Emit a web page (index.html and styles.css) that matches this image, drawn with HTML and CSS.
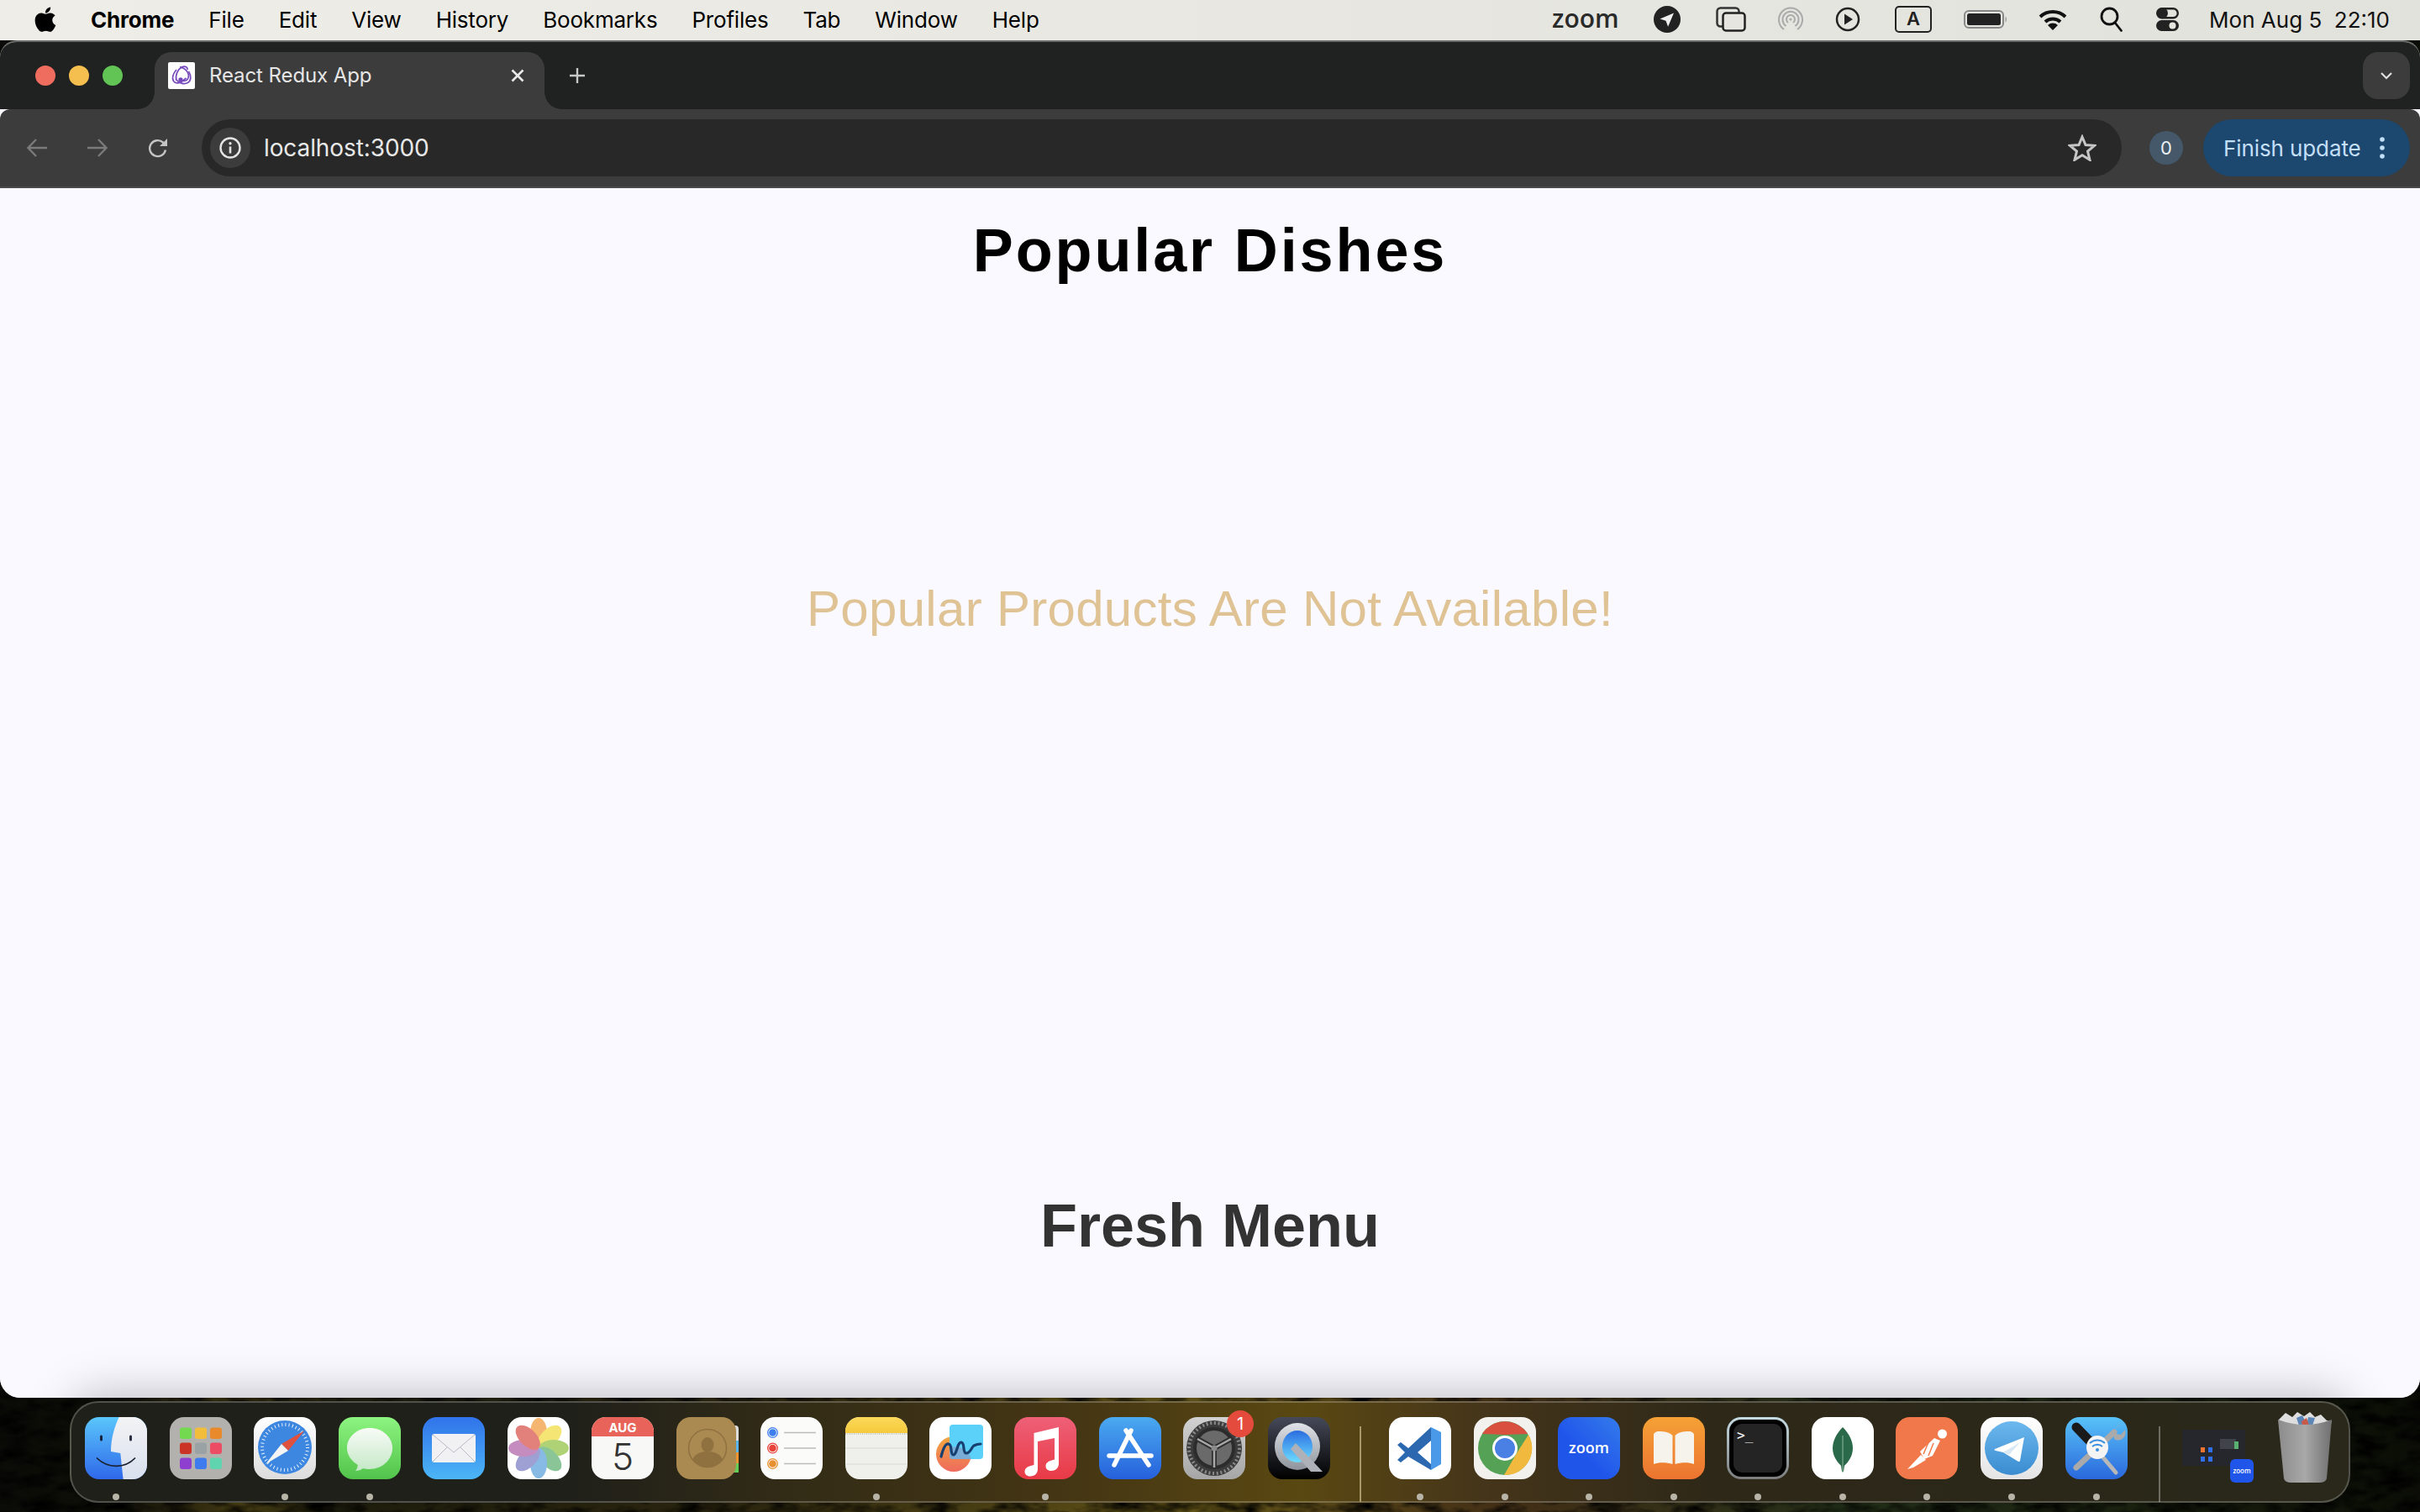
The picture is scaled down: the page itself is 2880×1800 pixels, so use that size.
FILE: index.html
```html
<!DOCTYPE html>
<html lang="en">
<head>
<meta charset="utf-8">
<title>React Redux App</title>
<link rel="stylesheet" href="styles.css">
</head>
<body>
<svg class="wallpaper" viewBox="0 0 2880 1800" preserveAspectRatio="none" aria-hidden="true">
  <defs>
    <linearGradient id="wp" x1="0" x2="1" y1="0" y2="0">
      <stop offset="0" stop-color="#0b0b07"/><stop offset=".05" stop-color="#12120a"/><stop offset=".1" stop-color="#4a4014"/><stop offset=".14" stop-color="#20200e"/><stop offset=".3" stop-color="#2e2810"/><stop offset=".5" stop-color="#6e5e1a"/><stop offset=".62" stop-color="#4a3418"/><stop offset=".76" stop-color="#26331a"/><stop offset=".9" stop-color="#1a220f"/><stop offset="1" stop-color="#0b0d06"/>
    </linearGradient>
    <filter id="leaf" x="0" y="0" width="100%" height="100%">
      <feTurbulence type="fractalNoise" baseFrequency=".03 .07" numOctaves="3" seed="4"/>
      <feColorMatrix values="0 0 0 0 0  0 0 0 0 0  0 0 0 0 0  2 0 0 0 -.7"/>
    </filter>
  </defs>
  <rect width="2880" height="1800" fill="url(#wp)"/>
  <rect width="2880" height="1800" fill="#000" filter="url(#leaf)"/>
</svg>

<header class="menubar">
  <div class="menu-left">
    <svg class="apple" viewBox="3.4 3 16.6 18.4"><path fill="#000" d="M17.05 20.28c-.98.95-2.05.8-3.08.35-1.09-.46-2.09-.48-3.24 0-1.44.62-2.2.44-3.06-.35C2.79 15.25 3.51 7.59 9.05 7.31c1.35.07 2.29.74 3.08.8 1.18-.24 2.31-.93 3.57-.84 1.51.12 2.65.72 3.4 1.8-3.12 1.87-2.38 5.98.48 7.13-.57 1.5-1.31 2.99-2.54 4.09zM12.03 7.25c-.15-2.23 1.66-4.07 3.74-4.25.29 2.58-2.34 4.5-3.74 4.25z"/></svg>
    <span class="menu-app">Chrome</span>
    <span>File</span><span>Edit</span><span>View</span><span>History</span><span>Bookmarks</span><span>Profiles</span><span>Tab</span><span>Window</span><span>Help</span>
  </div>
  <div class="menu-right">
    <span class="status-zoom">zoom</span>
    <svg class="st st-nav" viewBox="0 0 32 32"><circle cx="16" cy="16" r="16" fill="#222"/><path fill="#eee" d="M24 8.5 7.5 15.5l7 2.2 2.6 7z"/></svg>
    <svg class="st st-win" viewBox="0 0 36 30"><rect x="1.5" y="1.5" width="26" height="22" rx="4" fill="none" stroke="#333" stroke-width="2.5"/><rect x="8.5" y="7.5" width="26" height="21" rx="3.5" fill="#e6e5df" stroke="#222" stroke-width="2.5"/></svg>
    <svg class="st st-air" viewBox="0 0 30 30" fill="none" stroke="#aaa" stroke-width="2"><path d="M7 27a14 14 0 1 1 16 0"/><path d="M9.6 23a9.5 9.5 0 1 1 10.8 0"/><path d="M12 19a5 5 0 1 1 6 0"/><circle cx="15" cy="15" r="1.6" fill="#aaa" stroke="none"/></svg>
    <svg class="st st-play" viewBox="0 0 30 30"><circle cx="15" cy="15" r="13" fill="none" stroke="#222" stroke-width="2.5"/><path fill="#222" d="M11 8.5 21 15 11 21.500z"/></svg>
    <span class="st-a">A</span>
    <svg class="st st-bat" viewBox="0 0 52 22"><rect x="1" y="1" width="46" height="20" rx="5" fill="none" stroke="#888" stroke-width="2"/><rect x="4" y="4" width="40" height="14" rx="2.500" fill="#222"/><path d="M49.500 7.500c2 1 2 6 0 7z" fill="#999"/></svg>
    <svg class="st st-wifi" viewBox="0 0 34 26" fill="none" stroke="#111" stroke-width="4"><path d="M2 10a22 22 0 0 1 30 0"/><path d="M8 16a13 13 0 0 1 18 0"/><path fill="#111" stroke="none" d="M17 26l-6-6a8.500 8.500 0 0 1 12 0z"/></svg>
    <svg class="st st-search" viewBox="0 0 27 30" fill="none" stroke="#111" stroke-width="2.800"><circle cx="11.500" cy="11.500" r="9.500"/><path d="m18 19 7.500 9.500" stroke-linecap="round"/></svg>
    <svg class="st st-ctl" viewBox="0 0 27 28"><rect x="1.200" y="1.200" width="24.600" height="11" rx="5.500" fill="none" stroke="#222" stroke-width="2.400"/><circle cx="7.500" cy="6.700" r="6.500" fill="#222"/><rect y="15" width="27" height="13" rx="6.500" fill="#222"/><circle cx="19.500" cy="21.500" r="4" fill="#e6e5df"/></svg>
    <span class="clock">Mon Aug 5&nbsp;&nbsp;22:10</span>
  </div>
</header>

<div class="window">
  <div class="tabstrip">
    <div class="lights"><i class="light red"></i><i class="light yellow"></i><i class="light green"></i></div>
    <div class="tab">
      <svg class="favicon" viewBox="0 0 32 32"><rect width="32" height="32" rx="2" fill="#fff"/><g fill="none" stroke="#764abc" stroke-width="1.700"><path d="M10 22C8 15 12 8 17 5.500c4-1.500 6.500 1 6 3.500"/><path d="M14 5.800c6 .5 12 7 10 13-1.500 4-6 4.500-9 2"/><path d="M24.500 11c3.500 5.500 3 11-1 13.500-5 2.500-11 0-13-3"/><path d="M10 9c-3.500 4-6 9-3.500 13.500 2 3 6.500 3 10 .5l5-4"/><circle cx="15" cy="21" r="1.800" fill="#764abc"/></g></svg>
      <span class="tab-title">React Redux App</span>
      <svg class="tab-x" viewBox="0 0 16 16"><path d="m1.500 1.500 13 13m0-13-13 13" stroke="#e8e8e8" stroke-width="2.600"/></svg>
    </div>
    <svg class="tab-plus" viewBox="0 0 18 18"><path d="M9 0v18M0 9h18" stroke="#c8c8c8" stroke-width="2.400"/></svg>
    <div class="tab-list"><svg viewBox="0 0 14 9" class="chev"><path d="m1 1 6 6 6-6" fill="none" stroke="#e0e0e0" stroke-width="2.200"/></svg></div>
  </div>
  <div class="toolbar">
    <svg class="nav-btn" viewBox="0 0 24 24" fill="none" stroke="#7a7a7a" stroke-width="2.400"><path d="M24 12H2m9-10L1.500 12 11 22"/></svg>
    <svg class="nav-btn" viewBox="0 0 24 24" fill="none" stroke="#7a7a7a" stroke-width="2.400"><path d="M0 12h22M13 2l9.500 10L13 22"/></svg>
    <svg class="nav-btn reload" viewBox="0 0 24 26" fill="none" stroke="#c4c4c4" stroke-width="2.400"><path d="M21 15.500a9.500 9.500 0 1 1-3-9L21 9"/><path fill="#c4c4c4" stroke="none" d="M23 2v9h-9z"/></svg>
    <div class="omnibox">
      <span class="info-chip"><svg viewBox="0 0 26 26" class="info"><circle cx="13" cy="13" r="11.500" fill="none" stroke="#e4e4e4" stroke-width="2.400"/><path d="M13 11.500v8" stroke="#e4e4e4" stroke-width="2.600"/><circle cx="13" cy="7.800" r="1.700" fill="#e4e4e4"/></svg></span>
      <span class="url">localhost:3000</span>
      <svg class="star" viewBox="0 0 34 32"><path d="m17 3 4 9.500 10.500.8-8 6.800 2.500 10.200-9-5.500-9 5.500 2.500-10.200-8-6.800L13 12.500z" fill="none" stroke="#c6c6c6" stroke-width="3"/></svg>
    </div>
    <span class="count">0</span>
    <div class="update"><span>Finish update</span><svg class="kebab" viewBox="0 0 6 26"><circle cx="3" cy="3" r="2.800"/><circle cx="3" cy="13" r="2.800"/><circle cx="3" cy="23" r="2.800"/></svg></div>
  </div>
  <main class="page">
    <h1 class="title">Popular Dishes</h1>
    <p class="empty">Popular Products Are Not Available!</p>
    <h2 class="fresh">Fresh Menu</h2>
  </main>
</div>

<nav class="dock">
  <div class="app">
    <svg class="ic" viewBox="0 0 74 74"><defs><linearGradient id="f1" x1="0" x2="0" y1="0" y2="1"><stop offset="0" stop-color="#5ac6fb"/><stop offset="1" stop-color="#2f68ea"/></linearGradient><linearGradient id="f2" x1="0" x2="0" y1="0" y2="1"><stop offset="0" stop-color="#f3f3f4"/><stop offset="1" stop-color="#d8e0ee"/></linearGradient></defs><rect width="74" height="74" rx="17" fill="url(#f1)"/><path fill="url(#f2)" d="M40.700 0H57a17 17 0 0 1 17 17v40a17 17 0 0 1-17 17H45.600l-3.300-31-11.300-2c0-15 4-29 9.700-41z"/><rect x="18" y="21.500" width="3" height="7" rx="1.500" fill="#17233a"/><rect x="53" y="21.500" width="3" height="7" rx="1.500" fill="#2a3040"/><path d="M14.500 49c13 12.500 33 12.500 45 0" fill="none" stroke="#1a2130" stroke-width="1.700" stroke-linecap="round"/></svg>
    <i class="dot"></i>
  </div>
  <div class="app">
    <svg class="ic" viewBox="0 0 74 74"><rect width="74" height="74" rx="17" fill="#b2b1ad"/><rect x="12" y="12.500" width="14" height="13.500" rx="3" fill="#73d94f"/><rect x="30" y="12.500" width="14" height="13.500" rx="3" fill="#f3bd3c"/><rect x="48" y="12.500" width="14" height="13.500" rx="3" fill="#e88a2c"/><rect x="12" y="30.500" width="14" height="13.500" rx="3" fill="#cc3327"/><rect x="30" y="30.500" width="14" height="13.500" rx="3" fill="#9aa2a6"/><rect x="48" y="30.500" width="14" height="13.500" rx="3" fill="#ec4d65"/><rect x="12" y="48.500" width="14" height="13.500" rx="3" fill="#8e3fd0"/><rect x="30" y="48.500" width="14" height="13.500" rx="3" fill="#3d7bef"/><rect x="48" y="48.500" width="14" height="13.500" rx="3" fill="#5fd4ae"/></svg>
    <i class="dot hide"></i>
  </div>
  <div class="app">
    <svg class="ic" viewBox="0 0 74 74"><defs><linearGradient id="s1" x1="0" x2="0" y1="0" y2="1"><stop offset="0" stop-color="#fff"/><stop offset="1" stop-color="#dcdcdc"/></linearGradient></defs><rect width="74" height="74" rx="17" fill="url(#s1)"/><circle cx="37" cy="36" r="32" fill="#3d87e0"/><circle cx="37" cy="36" r="27" fill="none" stroke="#e8f2fc" stroke-width="4" stroke-dasharray="1 3.240"/><polygon points="60.500,16 33,32 41,40" fill="#e0503e"/><polygon points="14,56 33,32 41,40" fill="#f4f4f4"/></svg>
    <i class="dot"></i>
  </div>
  <div class="app">
    <svg class="ic" viewBox="0 0 74 74"><defs><linearGradient id="m1" x1="0" x2="0" y1="0" y2="1"><stop offset="0" stop-color="#8df480"/><stop offset="1" stop-color="#51c34b"/></linearGradient><linearGradient id="m2" x1="0" x2="0" y1="0" y2="1"><stop offset="0" stop-color="#f8fbf6"/><stop offset="1" stop-color="#c4e8c6"/></linearGradient></defs><rect width="74" height="74" rx="17" fill="url(#m1)"/><path fill="url(#m2)" d="M37 13c15 0 27 10.500 27 24s-12 25-27 25c-3 0-5.500-.4-8-1-2 1.800-5.500 3-9 3 1.600-2 2.600-4.500 2.800-7C15 52 10 45 10 37c0-13.500 12-24 27-24z"/></svg>
    <i class="dot"></i>
  </div>
  <div class="app">
    <svg class="ic" viewBox="0 0 74 74"><defs><linearGradient id="ml" x1="0" x2="0" y1="0" y2="1"><stop offset="0" stop-color="#3073ea"/><stop offset="1" stop-color="#4cb6f6"/></linearGradient></defs><rect width="74" height="74" rx="17" fill="url(#ml)"/><rect x="11" y="20" width="52" height="34" rx="3" fill="#f1f1f3"/><path d="M12 21 37 42l25-21M12 53l17-17m33 17L45 36" fill="none" stroke="#b9bcc4" stroke-width="1"/></svg>
    <i class="dot hide"></i>
  </div>
  <div class="app">
    <svg class="ic" viewBox="0 0 74 74"><rect width="74" height="74" rx="17" fill="#fff"/><g transform="translate(37 37)" opacity=".72"><ellipse cy="-18" rx="10" ry="18" fill="#f09a3a"/><ellipse cy="-18" rx="10" ry="18" fill="#f0dc40" transform="rotate(45)"/><ellipse cy="-18" rx="10" ry="18" fill="#92c244" transform="rotate(90)"/><ellipse cy="-18" rx="10" ry="18" fill="#5cb070" transform="rotate(135)"/><ellipse cy="-18" rx="10" ry="18" fill="#5aa0dc" transform="rotate(180)"/><ellipse cy="-18" rx="10" ry="18" fill="#7a7cc4" transform="rotate(225)"/><ellipse cy="-18" rx="10" ry="18" fill="#b060a8" transform="rotate(270)"/><ellipse cy="-18" rx="10" ry="18" fill="#d8504a" transform="rotate(315)"/></g></svg>
    <i class="dot hide"></i>
  </div>
  <div class="app">
    <svg class="ic" viewBox="0 0 74 74"><rect width="74" height="74" rx="17" fill="#f8f8f6"/><path d="M0 23V17A17 17 0 0 1 17 0h40a17 17 0 0 1 17 17v6z" fill="#e8645a"/><text class="ic-aug" x="37" y="18" text-anchor="middle">AUG</text><text class="ic-day" x="37" y="63" text-anchor="middle">5</text></svg>
    <i class="dot hide"></i>
  </div>
  <div class="app">
    <svg class="ic" viewBox="0 0 74 74"><rect x="66" y="10" width="8" height="56" rx="4" fill="#ddd"/><rect x="69" y="28" width="5" height="14" fill="#5ab4ee"/><rect x="69" y="42" width="5" height="13" fill="#ee9430"/><rect x="69" y="55" width="5" height="11" fill="#66cc58"/><rect width="71" height="74" rx="17" fill="#ab8a52"/><circle cx="37" cy="37" r="22.500" fill="none" stroke="#8f7140" stroke-width="1.500"/><ellipse cx="37" cy="33" rx="7.500" ry="9" fill="#8f7140"/><path d="M19 50c3-6 10-9 18-9s15 3 18 9c-4 6-11 9.500-18 9.500S23 56 19 50z" fill="#8f7140"/></svg>
    <i class="dot hide"></i>
  </div>
  <div class="app">
    <svg class="ic" viewBox="0 0 74 74"><rect width="74" height="74" rx="17" fill="#fbfbfa"/><g fill="none" stroke-width="1.300"><circle cx="14.500" cy="18.500" r="5.800" stroke="#3d7ff0"/><circle cx="14.500" cy="37" r="5.800" stroke="#e8423a"/><circle cx="14.500" cy="55.500" r="5.800" stroke="#e89030"/></g><circle cx="14.500" cy="18.500" r="4.300" fill="#3d7ff0"/><circle cx="14.500" cy="37" r="4.300" fill="#e8423a"/><circle cx="14.500" cy="55.500" r="4.300" fill="#e89030"/><path d="M28 18.500h38M28 37h38M28 55.500h38" stroke="#bcbcbc" stroke-width="1.300"/></svg>
    <i class="dot hide"></i>
  </div>
  <div class="app">
    <svg class="ic" viewBox="0 0 74 74"><defs><linearGradient id="n1" x1="0" x2="0" y1="0" y2="1"><stop offset="0" stop-color="#fbd95a"/><stop offset="1" stop-color="#f6c93c"/></linearGradient></defs><rect width="74" height="74" rx="17" fill="#efefec"/><path d="M0 19V17A17 17 0 0 1 17 0h40a17 17 0 0 1 17 17v2z" fill="url(#n1)"/><path d="M0 20h74" stroke="#b8b8b4" stroke-width="1.500" stroke-dasharray="1 1.500"/><path d="M0 37h74M0 56h74" stroke="#d8d8d4" stroke-width="1"/></svg>
    <i class="dot"></i>
  </div>
  <div class="app">
    <svg class="ic" viewBox="0 0 74 74"><defs><linearGradient id="fr" x1="0" x2="0" y1="0" y2="1"><stop offset="0" stop-color="#f2a83e"/><stop offset="1" stop-color="#ee6a5e"/></linearGradient></defs><rect width="74" height="74" rx="17" fill="#fff"/><circle cx="29" cy="44" r="21" fill="url(#fr)"/><rect x="24" y="9" width="40" height="41" rx="4" fill="#5bd0f8"/><path d="M24 36a21 21 0 0 1 26 14H28a4 4 0 0 1-4-4z" fill="#79acd6"/><path d="M14 47c2-8 5-16 9-15 5 1 1 13 6 13 4-1 4-15 9-15 5 1 1 13 6 13 5 0 6-7 9-9 2-1 5-2 8-2" fill="none" stroke="#173f70" stroke-width="3.200" stroke-linecap="round"/></svg>
    <i class="dot hide"></i>
  </div>
  <div class="app">
    <svg class="ic" viewBox="0 0 74 74"><defs><linearGradient id="mu" x1="0" x2="0" y1="0" y2="1"><stop offset="0" stop-color="#ee6078"/><stop offset="1" stop-color="#e83a46"/></linearGradient></defs><rect width="74" height="74" rx="17" fill="url(#mu)"/><path fill="#fff" d="M53 12v43.500c0 5-4 8.500-9 8.500-4 0-6.500-2.500-6.500-5.500 0-4 3.300-6 7-7l3.500-1V25l-20 4v33c0 5-4 8.500-9 8.500-4 0-6.500-2.500-6.500-5.500 0-4 3.300-6 7-7l4-1V19z"/></svg>
    <i class="dot"></i>
  </div>
  <div class="app">
    <svg class="ic" viewBox="0 0 74 74"><defs><linearGradient id="as" x1="0" x2="0" y1="0" y2="1"><stop offset="0" stop-color="#4aaaf0"/><stop offset="1" stop-color="#2560dc"/></linearGradient></defs><rect width="74" height="74" rx="17" fill="url(#as)"/><g stroke="#fff" stroke-width="5.500" stroke-linecap="round" fill="none"><path d="M38 16 18 57M32 16l27 41"/><path d="M12 46h50"/></g></svg>
    <i class="dot hide"></i>
  </div>
  <div class="app">
    <svg class="ic" viewBox="0 0 74 74"><defs><linearGradient id="se" x1="0" x2="0" y1="0" y2="1"><stop offset="0" stop-color="#d2d2d2"/><stop offset="1" stop-color="#a6a6a6"/></linearGradient></defs><rect width="74" height="74" rx="17" fill="url(#se)"/><circle cx="37" cy="37" r="33" fill="#3c3c3c"/><circle cx="37" cy="37" r="30" fill="none" stroke="#8a8a8a" stroke-width="4" stroke-dasharray="2 2.700"/><circle cx="37" cy="37" r="23" fill="#6a6a6a" stroke="#2c2c2c" stroke-width="4"/><g stroke="#2e2e2e" stroke-width="6"><path d="M37 37V60M37 37 17 26M37 37l20-11"/></g><g stroke="#a8a8a8" stroke-width="2.500"><path d="M37 37V60M37 37 17 26M37 37l20-11"/></g><circle cx="37" cy="37" r="3.500" fill="#8a8a8a"/></svg>
    <span class="badge">1</span>
    <i class="dot hide"></i>
  </div>
  <div class="app">
    <svg class="ic" viewBox="0 0 74 74"><defs><linearGradient id="qt" x1="0" x2="0" y1="0" y2="1"><stop offset="0" stop-color="#464a58"/><stop offset="1" stop-color="#000"/></linearGradient><linearGradient id="qr" x1="0" x2="0" y1="0" y2="1"><stop offset="0" stop-color="#dfe3e8"/><stop offset="1" stop-color="#8f949c"/></linearGradient><linearGradient id="qb" x1="0" x2="0" y1="0" y2="1"><stop offset="0" stop-color="#2a6ee0"/><stop offset="1" stop-color="#6edcff"/></linearGradient></defs><rect width="74" height="74" rx="17" fill="url(#qt)"/><ellipse cx="35" cy="35" rx="27" ry="28" fill="url(#qr)"/><ellipse cx="35" cy="35" rx="18" ry="19" fill="url(#qb)"/><path d="M33 31l32 34H51L27 38z" fill="#aeb2b8"/></svg>
    <i class="dot hide"></i>
  </div>
  <i class="sep sep-a"></i>
  <div class="app">
    <svg class="ic" viewBox="0 0 74 74"><rect width="74" height="74" rx="17" fill="#fff"/><path d="M50 12 23 37 14 30 10 33 19 42 10 51 14 54 23 47 50 63zM50 28 34 42 50 56z" fill="#2b68b0" fill-rule="evenodd"/><path d="M50 12 62 18V56L50 63z" fill="#4a98e8"/></svg>
    <i class="dot"></i>
  </div>
  <div class="app">
    <svg class="ic" viewBox="0 0 74 74"><rect width="74" height="74" rx="17" fill="#f2f1ed"/><circle cx="37" cy="37" r="32" fill="#55a257"/><path d="M10 20a32 32 0 0 1 54 0L37 21z" fill="#d9503f"/><path d="M65 21a32 32 0 0 1-29 48L51 43z" fill="#f2b93f"/><circle cx="37" cy="37" r="15" fill="#fff"/><circle cx="37" cy="37" r="12" fill="#4a7fe4"/></svg>
    <i class="dot"></i>
  </div>
  <div class="app">
    <svg class="ic" viewBox="0 0 74 74"><defs><linearGradient id="zm" x1="1" x2="0" y1="0" y2="1"><stop offset="0" stop-color="#347cec"/><stop offset=".6" stop-color="#2055ea"/></linearGradient></defs><rect width="74" height="74" rx="17" fill="url(#zm)"/><text class="ic-zoom" x="37" y="43" text-anchor="middle">zoom</text></svg>
    <i class="dot"></i>
  </div>
  <div class="app">
    <svg class="ic" viewBox="0 0 74 74"><defs><linearGradient id="bk" x1="0" x2="0" y1="0" y2="1"><stop offset="0" stop-color="#f5a136"/><stop offset="1" stop-color="#ec7430"/></linearGradient></defs><rect width="74" height="74" rx="17" fill="url(#bk)"/><path fill="#f6f2ec" d="M35.500 22C32 18 26 17 19 17c-3 0-6 1.500-6 4.500V56c6-2.500 16-2 22.500 0zM38.500 22C42 18 48 17 55 17c3 0 6 1.500 6 4.500V56c-6-2.500-16-2-22.500 0z"/></svg>
    <i class="dot"></i>
  </div>
  <div class="app">
    <svg class="ic" viewBox="0 0 74 74"><defs><linearGradient id="tm" x1="0" x2="0" y1="0" y2="1"><stop offset="0" stop-color="#c5dce4"/><stop offset="1" stop-color="#7c7c7c"/></linearGradient></defs><rect width="74" height="74" rx="17" fill="url(#tm)"/><rect x="3" y="3" width="68" height="68" rx="14" fill="#000"/><rect x="8" y="8" width="58" height="58" rx="10" fill="#242424"/><text class="ic-term" x="12" y="27">&gt;_</text></svg>
    <i class="dot"></i>
  </div>
  <div class="app">
    <svg class="ic" viewBox="0 0 74 74"><rect width="74" height="74" rx="17" fill="#fff"/><path d="M37 12c8 8 12 17 12 25 0 10-6 17-10 21l-1 7h-2l-1-7c-4-4-10-11-10-21 0-8 4-17 12-25z" fill="#2a6a4a"/><path d="M37 22v44" stroke="#8fb8a0" stroke-width="1"/></svg>
    <i class="dot"></i>
  </div>
  <div class="app">
    <svg class="ic" viewBox="0 0 74 74"><rect width="74" height="74" rx="17" fill="#f1784a"/><circle cx="55.500" cy="20" r="5.500" fill="#fff"/><path d="M46 25 53 28 44 46 34 50 29 41z" fill="#fff"/><path d="M40 28 33 44M45 31 39 46" stroke="#f1784a" stroke-width="1.500"/><path d="M30 45 36 51 21 60 14 62z" fill="#fff"/></svg>
    <i class="dot"></i>
  </div>
  <div class="app">
    <svg class="ic" viewBox="0 0 74 74"><defs><linearGradient id="tg" x1="0" x2="0" y1="0" y2="1"><stop offset="0" stop-color="#6cb8ee"/><stop offset="1" stop-color="#3a8cd0"/></linearGradient><linearGradient id="tg2" x1="0" x2="0" y1="0" y2="1"><stop offset="0" stop-color="#fff"/><stop offset="1" stop-color="#e4e4e4"/></linearGradient></defs><rect width="74" height="74" rx="17" fill="url(#tg2)"/><circle cx="37" cy="37" r="32" fill="url(#tg)"/><path d="M52 24 17 38c-1 1 0 2 1 2l9 2 18 11c1 0 2 0 2-1z" fill="#fff"/><path d="M27 42 47 30 34 45z" fill="#d8e8f5"/></svg>
    <i class="dot"></i>
  </div>
  <div class="app">
    <svg class="ic" viewBox="0 0 74 74"><defs><linearGradient id="wu" x1="0" x2="0" y1="0" y2="1"><stop offset="0" stop-color="#58c2f8"/><stop offset="1" stop-color="#2a68dc"/></linearGradient></defs><rect width="74" height="74" rx="17" fill="url(#wu)"/><path d="M13 12 36 36" stroke="#1a1a1a" stroke-width="11" stroke-linecap="round"/><path d="M38 40 60 66" stroke="#b8b8b8" stroke-width="5" stroke-linecap="round"/><path d="M58 18 13 60" stroke="#aaa" stroke-width="7" stroke-linecap="round"/><path d="M66 9l-7 5 1 6 6 1 5-6c2 8-3 14-12 12-4-6 0-16 7-18z" fill="#aaa"/><ellipse cx="38" cy="36" rx="13" ry="14" fill="#f4f4f4"/><g fill="none" stroke="#3a8ee0" stroke-width="2"><path d="M29 31a13 13 0 0 1 18 0M32 35a9 9 0 0 1 12 0"/></g><circle cx="38" cy="39" r="2" fill="#3a8ee0"/></svg>
    <i class="dot"></i>
  </div>
  <i class="sep sep-b"></i>
  <div class="thumb">
    <svg class="thumb-svg" viewBox="0 0 85 65"><rect width="75" height="43" y="0" rx="1" fill="#25272c"/><rect x="45" y="11" width="19" height="12" fill="#40444a"/><rect x="62" y="14" width="5" height="9" fill="#5ab070"/><rect x="22" y="21" width="5" height="6" fill="#ec7430"/><rect x="31" y="21" width="5" height="6" fill="#2f6fe8"/><rect x="22" y="32" width="5" height="6" fill="#2f6fe8"/><rect x="31" y="32" width="5" height="6" fill="#2f6fe8"/><rect x="57" y="35" width="28" height="28" rx="6" fill="#2055ea"/><text class="ic-zoom-s" x="71" y="52" text-anchor="middle">zoom</text></svg>
  </div>
  <div class="trash">
    <svg class="trash-svg" viewBox="0 0 64 86"><defs><linearGradient id="tr" x1="0" x2="1" y1="0" y2="0"><stop offset="0" stop-color="#8c8c8c"/><stop offset=".5" stop-color="#a8a8a8"/><stop offset="1" stop-color="#707070"/></linearGradient></defs><path d="M1 10 9 2l8 5 6-6 8 5 7-5 6 6 7-3 7 7 6 1-4 12H5z" fill="#dedede"/><path d="M22 8l7-3 5 10-9 2zM36 7l8 1-3 9h-7z" fill="#5a86b8"/><path d="M28 12l6-4 3 9h-8z" fill="#c85a4a"/><path d="M0 10q32 12 64 0l-6 70q-1 5-9 5H16q-8 0-9-5z" fill="url(#tr)"/></svg>
  </div>
</nav>
</body>
</html>
```
FILE: styles.css
```css
* { box-sizing: border-box; }
html, body { margin: 0; padding: 0; }
body {
  width: 2880px;
  height: 1800px;
  overflow: hidden;
  position: relative;
  display: flex;
  flex-direction: column;
  background: #0b0b07;
  font-family: "Inter", "Liberation Sans", sans-serif;
}
.wallpaper { position: absolute; left: 0; top: 0; width: 2880px; height: 1800px; }

/* menu bar */
.menubar {
  position: relative;
  flex: 0 0 48px;
  height: 48px;
  display: flex;
  justify-content: space-between;
  align-items: center;
  padding: 0 36px 2px 40px;
  background: linear-gradient(90deg, #eeede7, #e2e2dc);
  color: #000;
  font-size: 26px;
}
.menu-left { display: flex; align-items: center; gap: 41px; }
.menu-left span { letter-spacing: -.2px; }
.apple { width: 27px; height: 31px; }
.menu-right { display: flex; align-items: center; }
.menu-left .menu-app { font-weight: 700; letter-spacing: -.2px; }
.st { display: block; flex: none; }
.status-zoom { width: 80px; font: 600 30px "Open Sans", sans-serif; color: #2a2a2a; position: relative; top: -2px; }
.st-nav { width: 34px; height: 32px; margin-left: 40px; }
.st-win { width: 36px; height: 30px; margin-left: 41px; }
.st-air { width: 30px; height: 30px; margin-left: 38px; }
.st-play { width: 30px; height: 30px; margin-left: 38px; }
.st-a { width: 44px; height: 32px; margin-left: 41px; border: 2.500px solid #222; border-radius: 5px; font-size: 22px; font-weight: 600; text-align: center; line-height: 27px; color: #222; }
.st-bat { width: 52px; height: 22px; margin-left: 38px; }
.st-wifi { width: 34px; height: 26px; margin-left: 37px; }
.st-search { width: 27px; height: 30px; margin-left: 39px; }
.st-ctl { width: 27px; height: 28px; margin-left: 40px; }
.clock { margin-left: 36px; font-size: 26px; letter-spacing: 0; color: #111; white-space: nowrap; }

/* browser window */
.window {
  position: relative;
  flex: 0 0 1616px;
  height: 1616px;
  display: flex;
  flex-direction: column;
  border-radius: 20px 20px 24px 24px;
  border-top: 2px solid #6a6a6a;
  overflow: hidden;
  background: #f9f9ff;
}
.tabstrip {
  flex: 0 0 80px;
  height: 80px;
  position: relative;
  display: flex;
  align-items: flex-end;
  background: #202222;
  padding-left: 42px;
}
.lights { display: flex; gap: 16px; align-self: center; margin-right: 38px; }
.light { display: block; width: 24px; height: 24px; border-radius: 50%; }
.red { background: #ef6d5f; }
.yellow { background: #f5bf4f; }
.green { background: #61c454; }
.tab {
  position: relative;
  width: 464px;
  height: 68px;
  display: flex;
  align-items: flex-start;
  padding: 12px 24px 0 16px;
  background: #3c3c3c;
  border-radius: 20px 20px 0 0;
}
.tab::before, .tab::after {
  content: "";
  position: absolute;
  bottom: 0;
  width: 20px;
  height: 20px;
}
.tab::before { left: -20px; background: radial-gradient(circle at 0 0, transparent 19.500px, #3c3c3c 20px); }
.tab::after { right: -20px; background: radial-gradient(circle at 100% 0, transparent 19.500px, #3c3c3c 20px); }
.favicon { width: 32px; height: 32px; flex: none; }
.tab-title { margin-left: 17px; flex: 1; font-size: 24px; line-height: 32px; color: #e6e6e6; letter-spacing: -.1px; }
.tab-x { width: 16px; height: 16px; margin-top: 8px; flex: none; }
.tab-plus { width: 18px; height: 18px; margin: 0 0 31px 30px; flex: none; }
.tab-list {
  margin-left: auto;
  margin-right: 12px;
  margin-bottom: 12px;
  width: 56px;
  height: 56px;
  display: flex;
  align-items: center;
  justify-content: center;
  background: #3c3c3c;
  border-radius: 18px;
}
.chev { width: 14px; height: 9px; }
.toolbar {
  flex: 0 0 94px;
  height: 94px;
  display: flex;
  align-items: center;
  padding: 0 12px 0 32px;
  background: #3c3c3c;
  border-radius: 12px 12px 0 0;
  border-bottom: 2px solid #4a4a4a;
}
.nav-btn { width: 24px; height: 24px; margin-right: 48px; flex: none; }
.reload { height: 26px; margin-right: 40px; }
.omnibox {
  flex: 0 0 2285px;
  height: 68px;
  display: flex;
  align-items: center;
  padding: 0 30px 0 10px;
  background: #282828;
  border-radius: 34px;
}
.info-chip { width: 48px; height: 48px; display: flex; align-items: center; justify-content: center; border-radius: 50%; background: #3c3c3c; flex: none; }
.info { width: 26px; height: 26px; }
.url { margin-left: 16px; flex: 1; font-size: 28px; color: #e8e8e8; letter-spacing: -.1px; }
.star { width: 34px; height: 32px; flex: none; }
.count { margin-left: 33px; width: 40px; height: 40px; display: flex; align-items: center; justify-content: center; border-radius: 50%; background: #44586a; color: #e8eef2; font-size: 22px; flex: none; }
.update {
  margin-left: 24px;
  flex: 0 0 246px;
  height: 68px;
  display: flex;
  align-items: center;
  padding: 0 30px 0 24px;
  justify-content: space-between;
  background: #1c4870;
  border-radius: 34px;
  color: #c4dff8;
  font-size: 26px;
  letter-spacing: -.1px;
}
.kebab { width: 6px; height: 26px; fill: #c4dff8; flex: none; }

/* page content */
.page {
  flex: 1;
  background: #f9f9ff;
  text-align: center;
  font-family: "Liberation Sans", Arial, sans-serif;
  padding-top: 33px;
}
.title { margin: 0; font-size: 72px; font-weight: 700; color: #000; letter-spacing: 2.880px; line-height: 83px; }
.empty { margin: 350px 0 0; font-size: 60px; font-weight: 400; color: #dfc394; line-height: 69px; letter-spacing: .3px; }
.fresh { margin: 659px 0 0; font-size: 72px; font-weight: 700; color: #333; line-height: 83px; }

/* dock */
.dock {
  position: relative;
  margin: 4px 0 0 83px;
  width: 2714px;
  height: 121px;
  flex: none;
  display: flex;
  align-items: flex-start;
  padding: 17px 0 0 16px;
  border: 2px solid rgba(255, 255, 255, .22);
  border-radius: 34px;
  background: linear-gradient(90deg, #20201a 0, #20201a 22%, #332c16 32%, #453614 44%, #5a4812 54%, #45351a 62%, #2e2818 72%, #29281a 100%);
  box-shadow: 0 -6px 56px rgba(0, 0, 0, .26);
}
.app { position: relative; width: 74px; margin-right: 26.550px; flex: none; display: flex; flex-direction: column; align-items: center; gap: 17px; }
.ic { width: 74px; height: 74px; display: block; }
.dot { width: 8px; height: 8px; border-radius: 50%; background: #b8b5a8; display: block; }
.hide { visibility: hidden; }
.badge { position: absolute; right: -10px; top: -8px; width: 32px; height: 32px; border-radius: 50%; background: #e44b3c; color: #fff; font-size: 20px; line-height: 32px; text-align: center; }
.sep { display: block; width: 2px; height: 90px; margin-top: 11px; background: rgba(255, 255, 255, .32); flex: none; }
.sep-a { margin-left: 9px; margin-right: 33px; background: #a89a68; }
.sep-b { margin-left: 11px; margin-right: 26px; }
.thumb { width: 85px; flex: none; margin-top: 15px; }
.thumb-svg { width: 85px; height: 65px; display: block; }
.trash { width: 64px; margin-left: 29px; flex: none; margin-top: -7px; }
.trash-svg { width: 64px; height: 86px; display: block; }
.ic-aug { font: 700 15px "Inter", sans-serif; fill: #fff; }
.ic-day { font: 300 44px "Inter", sans-serif; fill: #333; }
.ic-zoom { font: 600 18px "Open Sans", sans-serif; fill: #fff; }
.ic-zoom-s { font: 600 8px "Open Sans", sans-serif; fill: #fff; }
.ic-term { font: 400 16px "DejaVu Sans Mono", monospace; fill: #fff; }
```
